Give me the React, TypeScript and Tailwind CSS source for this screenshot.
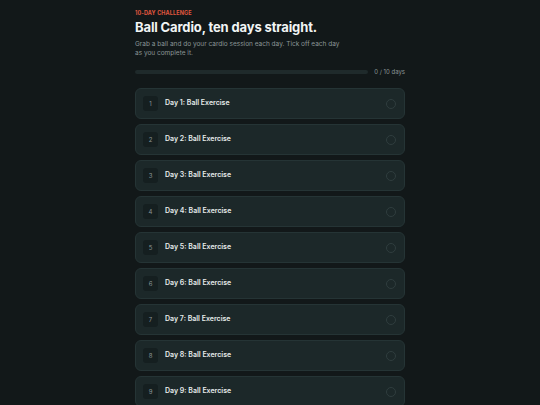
const days = Array.from({ length: 10 }, (_, i) => i + 1)

export default function App() {
  return (
    <div className="min-h-screen bg-[#121819] font-['Inter',sans-serif] text-[#e6ebeb]">
      <div className="mx-auto w-[270px] pt-[9px] pb-6">
        {/* Header */}
        <p className="text-[5.5px] leading-[8px] font-bold uppercase tracking-[0.02em] text-[#e0573f]">
          10-Day Challenge
        </p>
        <h1 className="mt-[2px] text-[13px] leading-[16px] font-bold tracking-[-0.01em] text-[#f1f4f4]">
          Ball Cardio, ten days straight.
        </h1>
        <p className="mt-[5px] w-[208px] text-[6.5px] leading-[8.5px] text-[#8b9697]">
          Grab a ball and do your cardio session each day. Tick off each day as you complete it.
        </p>

        {/* Progress */}
        <div className="mt-[11px] flex items-center gap-[6px]">
          <div className="h-[4px] flex-1 rounded-full bg-[#1f2a2b]">
            <div className="h-full rounded-full bg-[#e0573f]" style={{ width: '0%' }} />
          </div>
          <span className="text-[6px] leading-[8px] text-[#8b9697]">0 / 10 days</span>
        </div>

        {/* Days */}
        <div className="mt-[12px] flex flex-col gap-[5px]">
          {days.map(d => (
            <div
              key={d}
              className="flex h-[31px] items-center rounded-[6px] border border-[#253435] bg-[#1c2829] pl-[7px] pr-[8px]"
            >
              <div className="flex h-[15px] w-[15px] items-center justify-center rounded-[3px] bg-[#151f20] text-[6px] text-[#8b9697]">
                {d}
              </div>
              <span className="ml-[7px] flex-1 text-[7px] font-semibold text-[#e6ebeb]">
                Day {d}: Ball Exercise
              </span>
              <div className="h-[10px] w-[10px] rounded-full border border-[#2f3d3e]" />
            </div>
          ))}
        </div>
      </div>
    </div>
  )
}
